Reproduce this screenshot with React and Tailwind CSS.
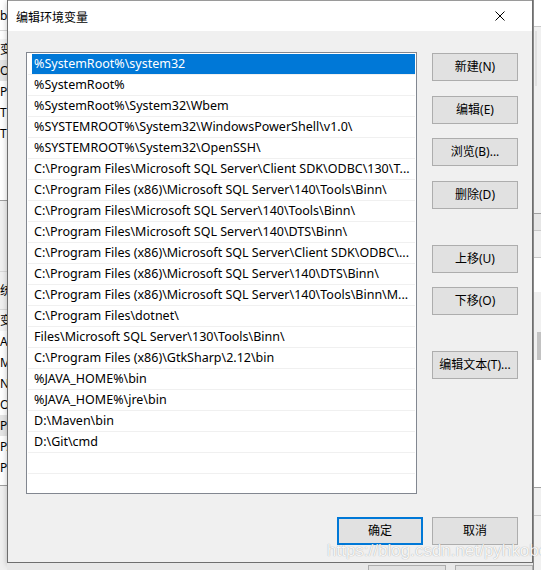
import React from 'react';

const paths = [
  '%SystemRoot%\\system32',
  '%SystemRoot%',
  '%SystemRoot%\\System32\\Wbem',
  '%SYSTEMROOT%\\System32\\WindowsPowerShell\\v1.0\\',
  '%SYSTEMROOT%\\System32\\OpenSSH\\',
  'C:\\Program Files\\Microsoft SQL Server\\Client SDK\\ODBC\\130\\T...',
  'C:\\Program Files (x86)\\Microsoft SQL Server\\140\\Tools\\Binn\\',
  'C:\\Program Files\\Microsoft SQL Server\\140\\Tools\\Binn\\',
  'C:\\Program Files\\Microsoft SQL Server\\140\\DTS\\Binn\\',
  'C:\\Program Files (x86)\\Microsoft SQL Server\\Client SDK\\ODBC\\...',
  'C:\\Program Files (x86)\\Microsoft SQL Server\\140\\DTS\\Binn\\',
  'C:\\Program Files (x86)\\Microsoft SQL Server\\140\\Tools\\Binn\\M...',
  'C:\\Program Files\\dotnet\\',
  'Files\\Microsoft SQL Server\\130\\Tools\\Binn\\',
  'C:\\Program Files (x86)\\GtkSharp\\2.12\\bin',
  '%JAVA_HOME%\\bin',
  '%JAVA_HOME%\\jre\\bin',
  'D:\\Maven\\bin',
  'D:\\Git\\cmd',
  '',
  '',
];

const font = { fontFamily: '"Noto Sans", "Noto Sans CJK SC", sans-serif' };

const Btn = ({ label, className = '', primary = false }) => (
  <div
    className={`w-[86px] h-[28px] flex items-center justify-center bg-[#e1e1e1] text-[12px] text-black leading-none ${
      primary ? 'border-2 border-[#0078d7]' : 'border border-[#adadad]'
    } ${className}`}
  >
    {label}
  </div>
);

// bits of the window behind the dialog, left side
const leftRows = [
  { t: '变', bg: 'bg-[#f5f5f5]' },
  { t: 'Or', bg: 'bg-[#e5e5e5]' },
  { t: 'Pa', bg: 'bg-white' },
  { t: 'TE', bg: 'bg-white' },
  { t: 'TM', bg: 'bg-white' },
];
const leftRows2 = [
  { t: '变', bg: 'bg-[#f5f5f5]' },
  { t: 'A', bg: 'bg-white' },
  { t: 'M', bg: 'bg-white' },
  { t: 'N', bg: 'bg-white' },
  { t: 'OS', bg: 'bg-white' },
  { t: 'Pa', bg: 'bg-[#e5e5e5]' },
  { t: 'PA', bg: 'bg-white' },
  { t: 'PR', bg: 'bg-white' },
];

export default function App() {
  return (
    <div
      className="w-[541px] h-[570px] flex overflow-hidden bg-[#f0f0f0] text-black relative"
      style={font}
    >
      {/* left strip behind dialog */}
      <div className="w-[7px] shrink-0 flex flex-col text-[12px] overflow-hidden bg-white">
        <div className="h-[31px] border-b border-[#d9d9d9] flex items-center pt-[2px] whitespace-nowrap">b</div>
        <div className="h-[8px]" />
        {leftRows.map((r, i) => (
          <div key={i} className={`h-[21px] ${r.bg} flex items-center whitespace-nowrap`}>
            {r.t}
          </div>
        ))}
        <div className="h-[57px] bg-white border-b border-[#a0a0a0]" />
        <div className="h-[71px] bg-[#f0f0f0] border-b border-[#d9d9d9]" />
        <div className="h-[38px] flex items-center whitespace-nowrap bg-[#f0f0f0] border-b border-[#d9d9d9]">统</div>
        {leftRows2.map((r, i) => (
          <div key={i} className={`h-[21px] ${r.bg} flex items-center whitespace-nowrap`}>
            {r.t}
          </div>
        ))}
        <div className="h-[8px] bg-white border-b border-[#a0a0a0]" />
        <div className="flex-1 bg-[#f0f0f0]" />
      </div>

      {/* dialog column */}
      <div className="w-[526px] shrink-0 flex flex-col">
        <div className="h-[563px] flex flex-col border border-t-0 border-[#6e6e6e] shadow-[0_2px_6px_rgba(0,0,0,0.25)]">
          {/* title bar */}
          <div className="h-[31px] bg-white flex items-center justify-between pl-[8px] pr-[27px] border-t border-[#9a9a9a]">
            <span className="text-[12px] leading-none mt-[1px]" style={{ fontFamily: '"Noto Sans CJK SC", sans-serif' }}>
              编辑环境变量
            </span>
            <svg width="10" height="10" viewBox="0 0 10 10" className="text-black">
              <path d="M0.5 0.5 L9.5 9.5 M9.5 0.5 L0.5 9.5" stroke="currentColor" strokeWidth="1" />
            </svg>
          </div>

          {/* body */}
          <div className="flex-1 bg-[#f0f0f0] pl-[18px] pr-[14px] pt-[21px] flex flex-col">
            <div className="flex">
              {/* path list */}
              <div className="w-[392px] h-[442px] bg-white border border-[#828790] pt-[1px] px-[1px] overflow-hidden">
                {paths.map((p, i) => (
                  <div key={i} className="h-[21px] border-b border-[#f0f0f0] flex">
                    <div
                      className={`flex-1 ml-[4px] pl-[2px] pt-[1px] flex items-center whitespace-nowrap overflow-hidden text-[12.5px] leading-none ${
                        i === 0 ? 'bg-[#0078d7] text-white' : ''
                      }`}
                    >
                      {p}
                    </div>
                  </div>
                ))}
              </div>

              {/* action buttons */}
              <div className="ml-[15px] pt-[1px] flex flex-col">
                <Btn label="新建(N)" />
                <Btn label="编辑(E)" className="mt-[15px]" />
                <Btn label="浏览(B)..." className="mt-[14px]" />
                <Btn label="删除(D)" className="mt-[15px]" />
                <Btn label="上移(U)" className="mt-[36px]" />
                <Btn label="下移(O)" className="mt-[14px]" />
                <Btn label="编辑文本(T)..." className="mt-[36px]" />
              </div>
            </div>

            {/* footer */}
            <div className="mt-[23px] flex justify-end gap-[9px]">
              <Btn label="确定" primary />
              <Btn label="取消" />
            </div>
          </div>
        </div>
        {/* strip below dialog */}
        <div className="flex-1 flex bg-[#e8e8e8]">
          <div className="ml-[361px] mt-[2px] w-[86px] border border-b-0 border-[#adadad] bg-[#e1e1e1]" />
          <div className="ml-[9px] mt-[2px] w-[86px] border border-b-0 border-[#adadad] bg-[#e1e1e1]" />
        </div>
      </div>

      {/* right strip behind dialog */}
      <div className="flex-1 flex flex-col bg-[#f0f0f0] border-l border-[#8a8a8a]">
        <div className="h-[27px] bg-white border-b border-[#c8c8c8]" />
        <div className="h-[55px] ml-[1px] w-[2px] bg-[#e0e0e0] mt-[4px]" />
        <div className="h-[127px]" />
        <div className="h-[17px] border-t border-[#a0a0a0] bg-[#e6e6e6]" />
        <div className="h-[27px] border-t border-[#c8c8c8]" />
        <div className="h-[35px] border-t border-[#c8c8c8] bg-white" />
        <div className="h-[68px] flex justify-end">
          <div className="w-[4px] mt-[40px] bg-[#c2c2c2]" />
        </div>
        <div className="h-[127px] bg-white" />
        <div className="h-[28px] border-t border-[#a0a0a0]" />
        <div className="flex-1 border-t border-[#c8c8c8]" />
      </div>

      {/* watermark */}
      <div
        className="absolute left-[327px] top-[538px] text-[17px] text-white/90 whitespace-nowrap"
        style={{ fontFamily: '"Liberation Sans", sans-serif', textShadow: '0 0 1px rgba(0,0,0,0.4)' }}
      >
        https://blog.csdn.net/pyhkobe
      </div>
    </div>
  );
}
